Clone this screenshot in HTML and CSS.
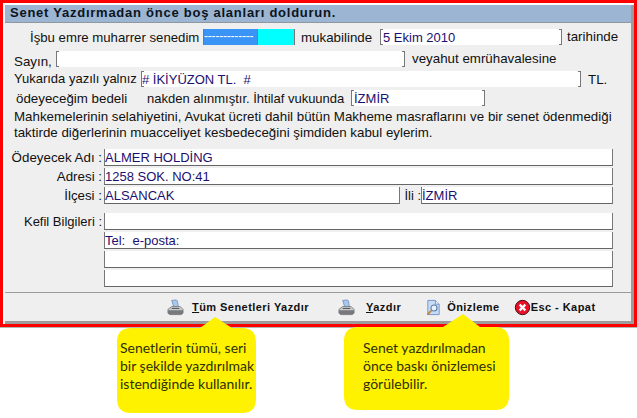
FILE: index.html
```html
<!DOCTYPE html>
<html lang="tr">
<head>
<meta charset="utf-8">
<title>Senet</title>
<link rel="stylesheet" href="styles.css">
</head>
<body>
<div class="frame">
  <div class="window">
    <div class="title">Senet Yazdırmadan önce boş alanları doldurun.</div>
    <div class="form">
      <div class="row r1">
        <span class="lbl w-isbu">İşbu emre muharrer senedim</span>
        <span class="fld w-blue"><span class="sel">-------------</span><span class="cyan"></span></span>
        <span class="lbl w-muk">mukabilinde</span>
        <span class="fld w-date val">5 Ekim 2010</span>
        <span class="lbl ml5 up">tarihinde</span>
      </div>
      <div class="row r2">
        <span class="lbl w-sayin dn">Sayın,</span>
        <span class="fld w-sayinf"></span>
        <span class="lbl ml7 up">veyahut emrühavalesine</span>
      </div>
      <div class="row r3">
        <span class="lbl w-yuk up">Yukarıda yazılı yalnız</span>
        <span class="fld w-yal val">#&nbsp;İKİYÜZON TL.&nbsp;&nbsp;#</span>
        <span class="lbl ml7">TL.</span>
      </div>
      <div class="row r4">
        <span class="lbl w-ode">ödeyeceğim bedeli</span>
        <span class="lbl w-nak">nakden alınmıştır. İhtilaf vukuunda</span>
        <span class="fld w-ihtilaf val">İZMİR</span>
      </div>
      <p class="para">Mahkemelerinin selahiyetini, Avukat ücreti dahil bütün Makheme masraflarını ve bir senet ödenmediği<br>taktirde diğerlerinin muacceliyet kesbedeceğini şimdiden kabul eylerim.</p>
      <div class="rows">
        <div class="row lr"><span class="key">Ödeyecek Adı :</span><span class="fld box w-full val">ALMER HOLDİNG</span></div>
        <div class="row lr"><span class="key">Adresi :</span><span class="fld box w-full val">1258 SOK. NO:41</span></div>
        <div class="row lr"><span class="key">İlçesi :</span><span class="fld box w-ilce val">ALSANCAK</span><span class="key2">İli :</span><span class="fld box w-il val">İZMİR</span></div>
      </div>
      <div class="rows kefil">
        <div class="row lr"><span class="key small">Kefil Bilgileri :</span><span class="fld box w-full val"></span></div>
        <div class="row lr"><span class="key"></span><span class="fld box w-full val">Tel:&nbsp;&nbsp;e-posta:</span></div>
        <div class="row lr"><span class="key"></span><span class="fld box w-full val"></span></div>
        <div class="row lr"><span class="key"></span><span class="fld box w-full val"></span></div>
      </div>
    </div>
    <div class="footer">
      <span class="act a1">
        <svg class="ico" viewBox="0 0 18 18"><use href="#printer"/></svg>
        <span class="cap c1"><u>T</u>üm Senetleri Yazdır</span>
      </span>
      <span class="act a2">
        <svg class="ico" viewBox="0 0 18 18"><use href="#printer"/></svg>
        <span class="cap c2"><u>Y</u>azdır</span>
      </span>
      <span class="act a3">
        <svg class="ico" viewBox="0 0 18 18">
          <path d="M3 1.5h8l4 4v11H3z" fill="#c9dcf5" stroke="#6f93c8"/>
          <path d="M11 1.5v4h4" fill="#f2f7fd" stroke="#6f93c8"/>
          <circle cx="9.5" cy="9.5" r="3.2" fill="#eaf3fb" stroke="#5d7fa8" stroke-width="1.2"/>
          <path d="M7 12l-4.5 4.5" stroke="#c08a3e" stroke-width="2"/>
        </svg>
        <span class="cap c3">Önizleme</span>
      </span>
      <span class="act a4">
        <svg class="ico" viewBox="0 0 18 18">
          <circle cx="9" cy="9" r="7.6" fill="#e8102a" stroke="#3a0508" stroke-width="1"/>
          <path d="M6 6l6 6M12 6l-6 6" stroke="#fff" stroke-width="2.4"/>
        </svg>
        <span class="cap c4">Esc - Kapat</span>
      </span>
    </div>
  </div>
</div>

<svg class="defs" width="0" height="0">
  <symbol id="printer" viewBox="0 0 18 18">
    <path d="M5 1.5l5-.5 1 1 1 6H7z" fill="#a9c8ec" stroke="#5f86b8" stroke-width=".8"/>
    <path d="M1 11l4-3h9l3 3v4l-2 1.5H3L1 15z" fill="#c9cbcd" stroke="#6d7073" stroke-width=".8"/>
    <path d="M1 12h16v3l-2 1.5H3L1 15z" fill="#77797c"/>
    <path d="M5 10h8" stroke="#4a4c4f"/>
  </symbol>
</svg>

<div class="callout left">
  <svg class="bubble" viewBox="0 0 140 97"><path d="M98 0L115 11H125Q139 11 139 25V82Q139 96 125 96H14Q0 96 0 82V25Q0 11 14 11H83Z"/></svg>
  <p class="tip">Senetlerin tümü, seri<br>bir şekilde yazdırılmak<br>istendiğinde kullanılır.</p>
</div>
<div class="callout right">
  <svg class="bubble" viewBox="0 0 166 97"><path d="M119 0L136 13H151Q165 13 165 27V82Q165 96 151 96H14Q0 96 0 82V27Q0 13 14 13H99Z"/></svg>
  <p class="tip">Senet yazdırılmadan<br>önce baskı önizlemesi<br>görülebilir.</p>
</div>
</body>
</html>
```
FILE: styles.css
```css
* { box-sizing: border-box; }
html, body { margin: 0; padding: 0; }
body {
  position: relative;
  width: 637px;
  height: 418px;
  overflow: hidden;
  background: #fff;
  font-family: "Liberation Sans", Arial, sans-serif;
  font-size: 13.33px;
  color: #111;
}
.frame {
  width: 637px;
  height: 327px;
  border: 3px solid #ff0000;
  padding: 2px 0 0 2px;
  background: #fff;
  box-shadow: 0 1px 0 #b5b5b5;
}
.window {
  height: 319px;
  background: #efefef;
  border-right: 3px solid #9c9c9c;
  border-bottom: 3px solid #9c9c9c;
  display: flex;
  flex-direction: column;
}
.title {
  height: 18px;
  background: #9bb5d3;
  border-bottom: 1px solid #8f979f;
  padding-left: 5px;
  font-weight: bold;
  font-size: 13px;
  line-height: 16px;
  letter-spacing: .75px;
  color: #0c1420;
  white-space: nowrap;
}
.form { flex: 1; }
.row { display: flex; align-items: center; height: 16px; white-space: nowrap; }
.row > * { flex: none; }
.r1 { margin-top: 6px; }
.r2 { margin-top: 6px; }
.r3 { margin-top: 4px; }
.r4 { margin-top: 3px; }
.lbl { display: block; }
.up { margin-bottom: 2px; }
.dn { margin-top: 4px; }
.w-isbu { width: 198px; padding-left: 25px; font-size: 13.2px; }
.w-muk { width: 85px; padding-left: 6px; }
.w-sayin { width: 51px; padding-left: 9px; }
.w-yuk { width: 136px; padding-left: 9px; font-size: 13px; }
.w-ode { width: 142px; padding-left: 11px; }
.w-nak { width: 204px; font-size: 13px; }
.ml5 { margin-left: 5px; }
.ml7 { margin-left: 7px; }
.fld {
  display: flex;
  align-items: center;
  height: 16px;
  background:
    linear-gradient(#777, #777) 0 0 / 2px 1px no-repeat,
    linear-gradient(#777, #777) 0 100% / 2px 1px no-repeat,
    linear-gradient(#777, #777) 100% 0 / 2px 1px no-repeat,
    linear-gradient(#777, #777) 100% 100% / 2px 1px no-repeat,
    #fff;
  border-left: 1px solid #777;
  border-right: 1px solid #777;
  line-height: 15px;
  overflow: hidden;
}
.val { color: #1c0f70; font-size: 13px; }
.w-blue { width: 92px; }
.w-date { width: 182px; padding-left: 2px; }
.w-sayinf { width: 349px; }
.w-yal { width: 440px; }
.w-ihtilaf { width: 134px; padding-left: 2px; }
.sel { width: 54px; height: 100%; background: #3a94f5; color: #fff; font-size: 12px; line-height: 14px; border-right: 1px solid #c4683a; letter-spacing: -.2px; }
.cyan { flex: 1; height: 100%; background: #00ffff; }
.para { margin: 3px 0 0; padding-left: 9px; line-height: 16px; white-space: nowrap; }
.rows { margin-top: 8px; display: flex; flex-direction: column; gap: 2px; }
.kefil { margin-top: 9px; }
.lr { height: 17px; }
.key { width: 99px; padding-right: 2px; text-align: right; }
.small { font-size: 13px; }
.key2 { width: 21px; text-align: right; font-size: 13px; }
.box { height: 17px; border-bottom: 1px solid #666; background: #fff; }
.w-full { width: 509px; }
.w-ilce { width: 296px; }
.w-il { width: 192px; }
.footer {
  margin: 0;
  height: 29px;
  border-top: 1px solid #9a9a9a;
  display: flex;
  align-items: center;
  background: #efefef;
}
.act { display: flex; align-items: center; font-weight: bold; font-size: 11px; letter-spacing: .45px; color: #111; white-space: nowrap; }
.ico { width: 17px; height: 17px; flex: none; }
.a1 { margin-left: 162px; }
.a2 { margin-left: 29px; }
.a3 { margin-left: 24px; }
.a4 { margin-left: 14px; }
.c1 { margin-left: 8px; }
.c2 { margin-left: 11px; }
.c3 { margin-left: 5px; }
.c4 { margin-left: 0; }
.defs { position: absolute; }
.callout { position: absolute; }
.callout.left { left: 117px; top: 317px; width: 140px; height: 97px; }
.callout.right { left: 344px; top: 314px; width: 166px; height: 97px; }
.bubble { position: absolute; inset: 0; width: 100%; height: 100%; fill: #fff200; }
.tip {
  position: relative;
  margin: 0;
  font-family: Lato, "Liberation Sans", sans-serif;
  font-size: 14px;
  line-height: 18px;
  color: #2c3000;
  white-space: nowrap;
}
.left .tip { padding: 22px 0 0 3px; }
.right .tip { padding: 25px 0 0 19px; }
```
